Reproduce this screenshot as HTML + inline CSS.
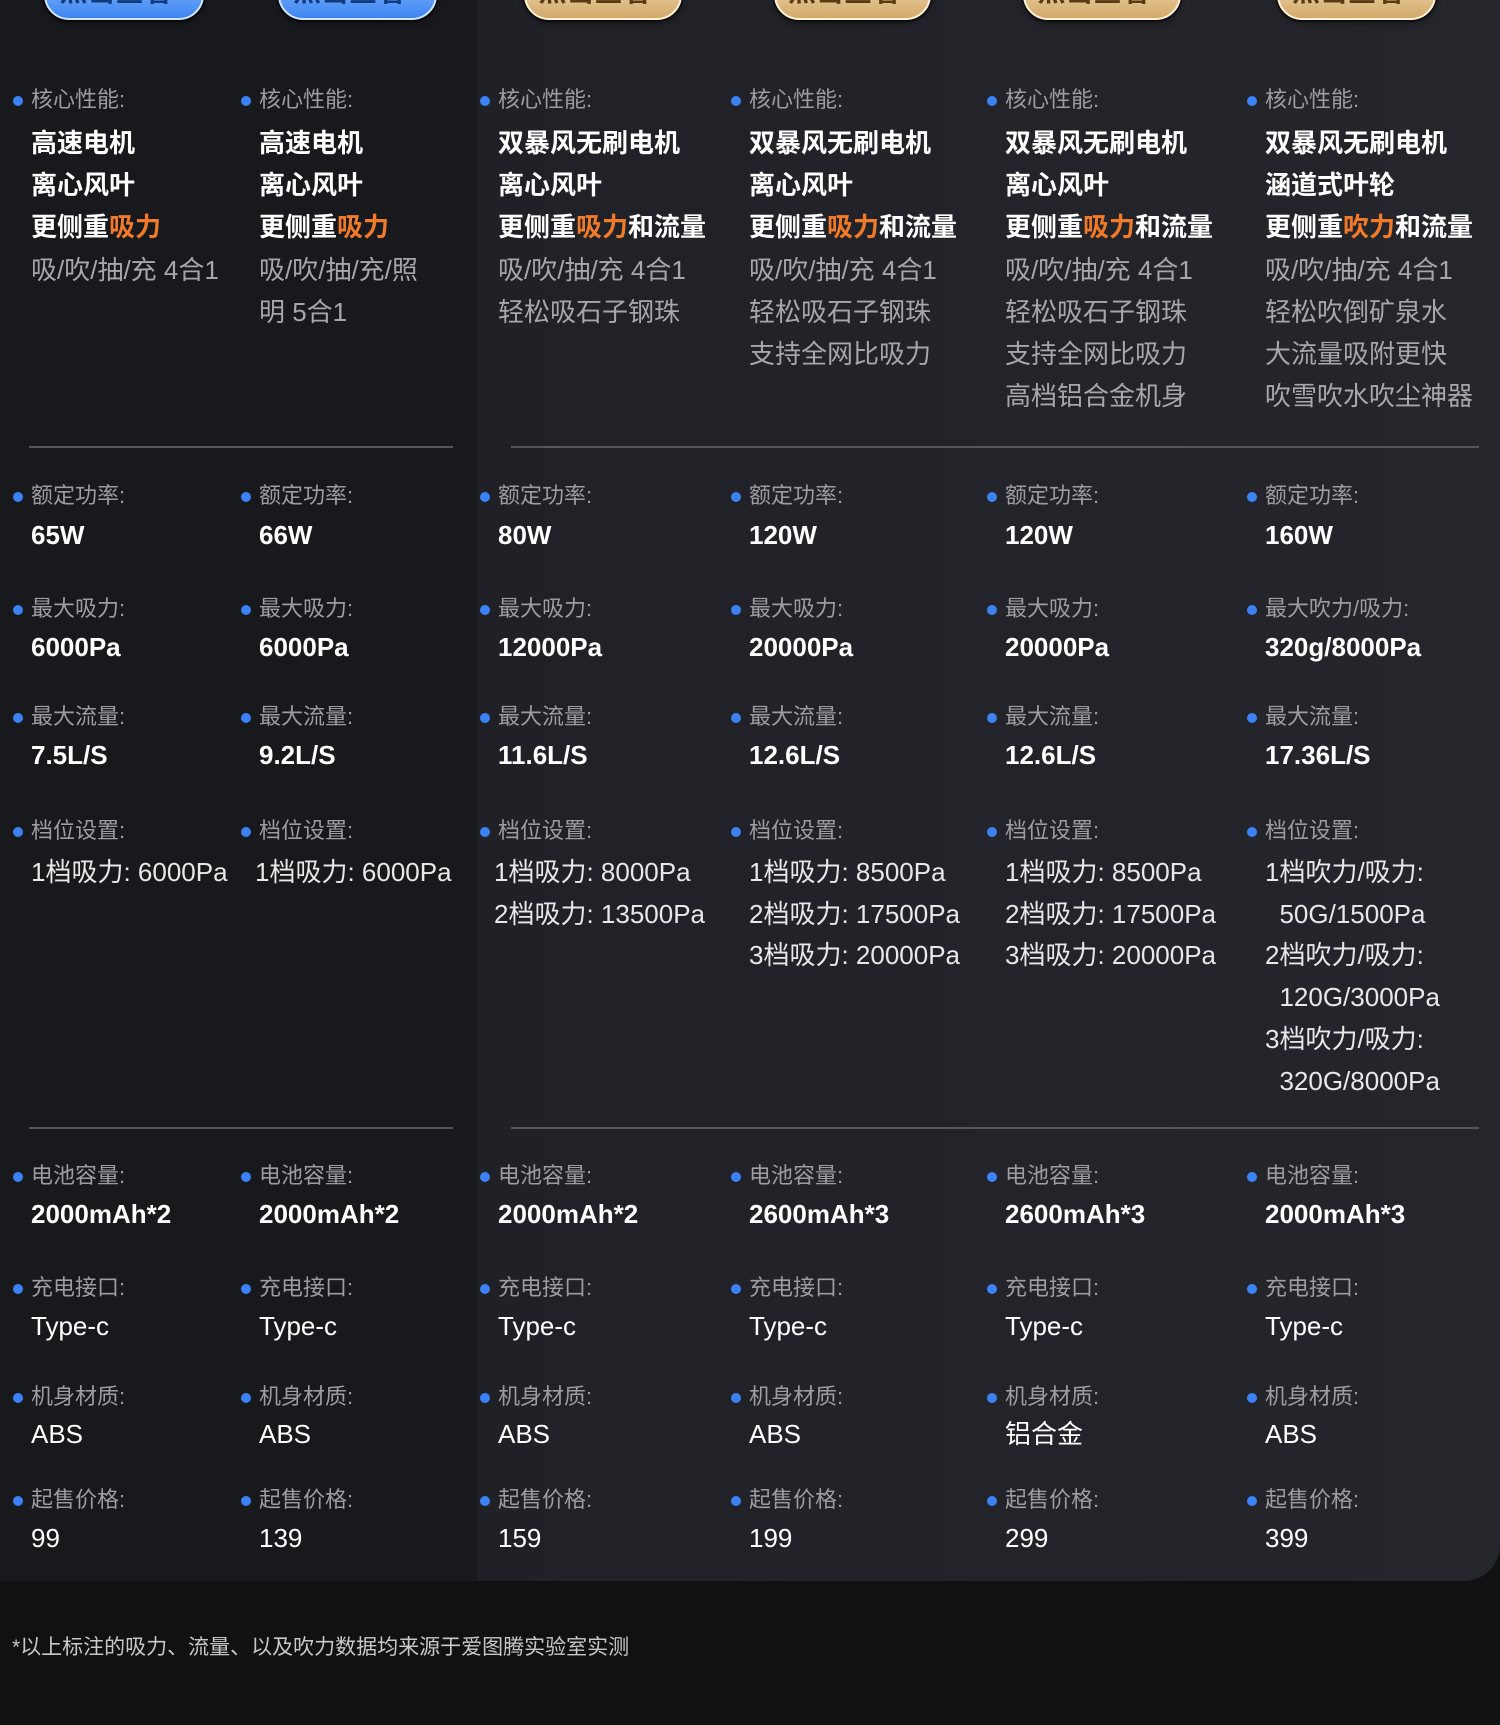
<!DOCTYPE html>
<html><head><meta charset="utf-8"><style>
*{margin:0;padding:0;box-sizing:border-box}
body{width:1500px;height:1725px;background:#111114;position:relative;overflow:hidden;font-family:"Liberation Sans","Noto Sans CJK SC",sans-serif}
.pl{position:absolute;left:0;top:0;width:477px;height:1581px;background:#18191d}
.pr{position:absolute;left:477px;top:0;width:1023px;height:1581px;background:linear-gradient(90deg,#202127,#25262c);border-bottom-right-radius:36px}
.btn{position:absolute;top:-30px;height:50px;border-radius:25px;overflow:hidden;font-size:28px;font-weight:bold;text-align:center;line-height:40px;box-shadow:0 0 0 2px rgba(0,0,0,.35),0 3px 6px rgba(0,0,0,.5)}
.bb{background:linear-gradient(#8fc3ff,#3d84f0);border:2px solid #cfe4ff;color:#123a80}
.bg{background:linear-gradient(#f7e3bd,#d2a96a);border:2px solid #fff0d6;color:#5a3a12}
.line{position:absolute;height:2px;background:#55565c}
.c{position:absolute}
.lb{position:absolute;font-size:22px;color:#9c9da2;line-height:30px;white-space:nowrap}
.lb::before{content:"";position:absolute;left:-18px;top:11px;width:10px;height:10px;border-radius:50%;background:#3b82f6}
.t{position:absolute;font-size:26px;line-height:42px;white-space:nowrap;color:#fff}
.b{font-weight:bold}
.g{color:#a6a7ab}
.o{color:#f07a2a}
.s{color:#e8e8e8;line-height:41.7px}
.foot{position:absolute;left:12px;top:1631px;font-size:21px;color:#c8c8cc}
</style></head><body>
<div class="pl"></div><div class="pr"></div>
<div class="btn bb" style="left:44px;width:160px">点击查看 ›</div>
<div class="btn bb" style="left:278px;width:159px">点击查看 ›</div>
<div class="btn bg" style="left:524px;width:158px">点击查看 ›</div>
<div class="btn bg" style="left:774px;width:157px">点击查看 ›</div>
<div class="btn bg" style="left:1023px;width:158px">点击查看 ›</div>
<div class="btn bg" style="left:1277px;width:159px">点击查看 ›</div>
<div class="line" style="left:29px;width:424px;top:446px"></div>
<div class="line" style="left:511px;width:968px;top:446px"></div>
<div class="line" style="left:29px;width:424px;top:1127px"></div>
<div class="line" style="left:511px;width:968px;top:1127px"></div>

<div class="c" style="left:31px;top:0">
<div class="lb" style="top:85px">核心性能:</div>
<div class="t b" style="top:122px">高速电机<br>离心风叶<br>更侧重<span class="o">吸力</span></div>
<div class="t g" style="top:249px">吸/吹/抽/充 4合1</div>
<div class="lb" style="top:481px">额定功率:</div><div class="t b" style="top:514px">65W</div>
<div class="lb" style="top:594px">最大吸力:</div><div class="t b" style="top:626px">6000Pa</div>
<div class="lb" style="top:702px">最大流量:</div><div class="t b" style="top:734px">7.5L/S</div>
<div class="lb" style="top:816px">档位设置:</div><div class="t s" style="top:852px">1档吸力: 6000Pa</div>
<div class="lb" style="top:1161px">电池容量:</div><div class="t b" style="top:1193px">2000mAh*2</div>
<div class="lb" style="top:1273px">充电接口:</div><div class="t" style="top:1305px">Type-c</div>
<div class="lb" style="top:1382px">机身材质:</div><div class="t" style="top:1413px">ABS</div>
<div class="lb" style="top:1485px">起售价格:</div><div class="t" style="top:1517px">99</div>
</div>

<div class="c" style="left:259px;top:0">
<div class="lb" style="top:85px">核心性能:</div>
<div class="t b" style="top:122px">高速电机<br>离心风叶<br>更侧重<span class="o">吸力</span></div>
<div class="t g" style="top:249px">吸/吹/抽/充/照<br>明 5合1</div>
<div class="lb" style="top:481px">额定功率:</div><div class="t b" style="top:514px">66W</div>
<div class="lb" style="top:594px">最大吸力:</div><div class="t b" style="top:626px">6000Pa</div>
<div class="lb" style="top:702px">最大流量:</div><div class="t b" style="top:734px">9.2L/S</div>
<div class="lb" style="top:816px">档位设置:</div><div class="t s" style="top:852px;left:-4px">1档吸力: 6000Pa</div>
<div class="lb" style="top:1161px">电池容量:</div><div class="t b" style="top:1193px">2000mAh*2</div>
<div class="lb" style="top:1273px">充电接口:</div><div class="t" style="top:1305px">Type-c</div>
<div class="lb" style="top:1382px">机身材质:</div><div class="t" style="top:1413px">ABS</div>
<div class="lb" style="top:1485px">起售价格:</div><div class="t" style="top:1517px">139</div>
</div>

<div class="c" style="left:498px;top:0">
<div class="lb" style="top:85px">核心性能:</div>
<div class="t b" style="top:122px">双暴风无刷电机<br>离心风叶<br>更侧重<span class="o">吸力</span>和流量</div>
<div class="t g" style="top:249px">吸/吹/抽/充 4合1<br>轻松吸石子钢珠</div>
<div class="lb" style="top:481px">额定功率:</div><div class="t b" style="top:514px">80W</div>
<div class="lb" style="top:594px">最大吸力:</div><div class="t b" style="top:626px">12000Pa</div>
<div class="lb" style="top:702px">最大流量:</div><div class="t b" style="top:734px">11.6L/S</div>
<div class="lb" style="top:816px">档位设置:</div><div class="t s" style="top:852px;left:-4px">1档吸力: 8000Pa<br>2档吸力: 13500Pa</div>
<div class="lb" style="top:1161px">电池容量:</div><div class="t b" style="top:1193px">2000mAh*2</div>
<div class="lb" style="top:1273px">充电接口:</div><div class="t" style="top:1305px">Type-c</div>
<div class="lb" style="top:1382px">机身材质:</div><div class="t" style="top:1413px">ABS</div>
<div class="lb" style="top:1485px">起售价格:</div><div class="t" style="top:1517px">159</div>
</div>

<div class="c" style="left:749px;top:0">
<div class="lb" style="top:85px">核心性能:</div>
<div class="t b" style="top:122px">双暴风无刷电机<br>离心风叶<br>更侧重<span class="o">吸力</span>和流量</div>
<div class="t g" style="top:249px">吸/吹/抽/充 4合1<br>轻松吸石子钢珠<br>支持全网比吸力</div>
<div class="lb" style="top:481px">额定功率:</div><div class="t b" style="top:514px">120W</div>
<div class="lb" style="top:594px">最大吸力:</div><div class="t b" style="top:626px">20000Pa</div>
<div class="lb" style="top:702px">最大流量:</div><div class="t b" style="top:734px">12.6L/S</div>
<div class="lb" style="top:816px">档位设置:</div><div class="t s" style="top:852px">1档吸力: 8500Pa<br>2档吸力: 17500Pa<br>3档吸力: 20000Pa</div>
<div class="lb" style="top:1161px">电池容量:</div><div class="t b" style="top:1193px">2600mAh*3</div>
<div class="lb" style="top:1273px">充电接口:</div><div class="t" style="top:1305px">Type-c</div>
<div class="lb" style="top:1382px">机身材质:</div><div class="t" style="top:1413px">ABS</div>
<div class="lb" style="top:1485px">起售价格:</div><div class="t" style="top:1517px">199</div>
</div>

<div class="c" style="left:1005px;top:0">
<div class="lb" style="top:85px">核心性能:</div>
<div class="t b" style="top:122px">双暴风无刷电机<br>离心风叶<br>更侧重<span class="o">吸力</span>和流量</div>
<div class="t g" style="top:249px">吸/吹/抽/充 4合1<br>轻松吸石子钢珠<br>支持全网比吸力<br>高档铝合金机身</div>
<div class="lb" style="top:481px">额定功率:</div><div class="t b" style="top:514px">120W</div>
<div class="lb" style="top:594px">最大吸力:</div><div class="t b" style="top:626px">20000Pa</div>
<div class="lb" style="top:702px">最大流量:</div><div class="t b" style="top:734px">12.6L/S</div>
<div class="lb" style="top:816px">档位设置:</div><div class="t s" style="top:852px">1档吸力: 8500Pa<br>2档吸力: 17500Pa<br>3档吸力: 20000Pa</div>
<div class="lb" style="top:1161px">电池容量:</div><div class="t b" style="top:1193px">2600mAh*3</div>
<div class="lb" style="top:1273px">充电接口:</div><div class="t" style="top:1305px">Type-c</div>
<div class="lb" style="top:1382px">机身材质:</div><div class="t" style="top:1413px">铝合金</div>
<div class="lb" style="top:1485px">起售价格:</div><div class="t" style="top:1517px">299</div>
</div>

<div class="c" style="left:1265px;top:0">
<div class="lb" style="top:85px">核心性能:</div>
<div class="t b" style="top:122px">双暴风无刷电机<br>涵道式叶轮<br>更侧重<span class="o">吹力</span>和流量</div>
<div class="t g" style="top:249px">吸/吹/抽/充 4合1<br>轻松吹倒矿泉水<br>大流量吸附更快<br>吹雪吹水吹尘神器</div>
<div class="lb" style="top:481px">额定功率:</div><div class="t b" style="top:514px">160W</div>
<div class="lb" style="top:594px">最大吹力/吸力:</div><div class="t b" style="top:626px">320g/8000Pa</div>
<div class="lb" style="top:702px">最大流量:</div><div class="t b" style="top:734px">17.36L/S</div>
<div class="lb" style="top:816px">档位设置:</div><div class="t s" style="top:852px">1档吹力/吸力:<br>&nbsp;&nbsp;50G/1500Pa<br>2档吹力/吸力:<br>&nbsp;&nbsp;120G/3000Pa<br>3档吹力/吸力:<br>&nbsp;&nbsp;320G/8000Pa</div>
<div class="lb" style="top:1161px">电池容量:</div><div class="t b" style="top:1193px">2000mAh*3</div>
<div class="lb" style="top:1273px">充电接口:</div><div class="t" style="top:1305px">Type-c</div>
<div class="lb" style="top:1382px">机身材质:</div><div class="t" style="top:1413px">ABS</div>
<div class="lb" style="top:1485px">起售价格:</div><div class="t" style="top:1517px">399</div>
</div>

<div class="foot">*以上标注的吸力、流量、以及吹力数据均来源于爱图腾实验室实测</div>
</body></html>
